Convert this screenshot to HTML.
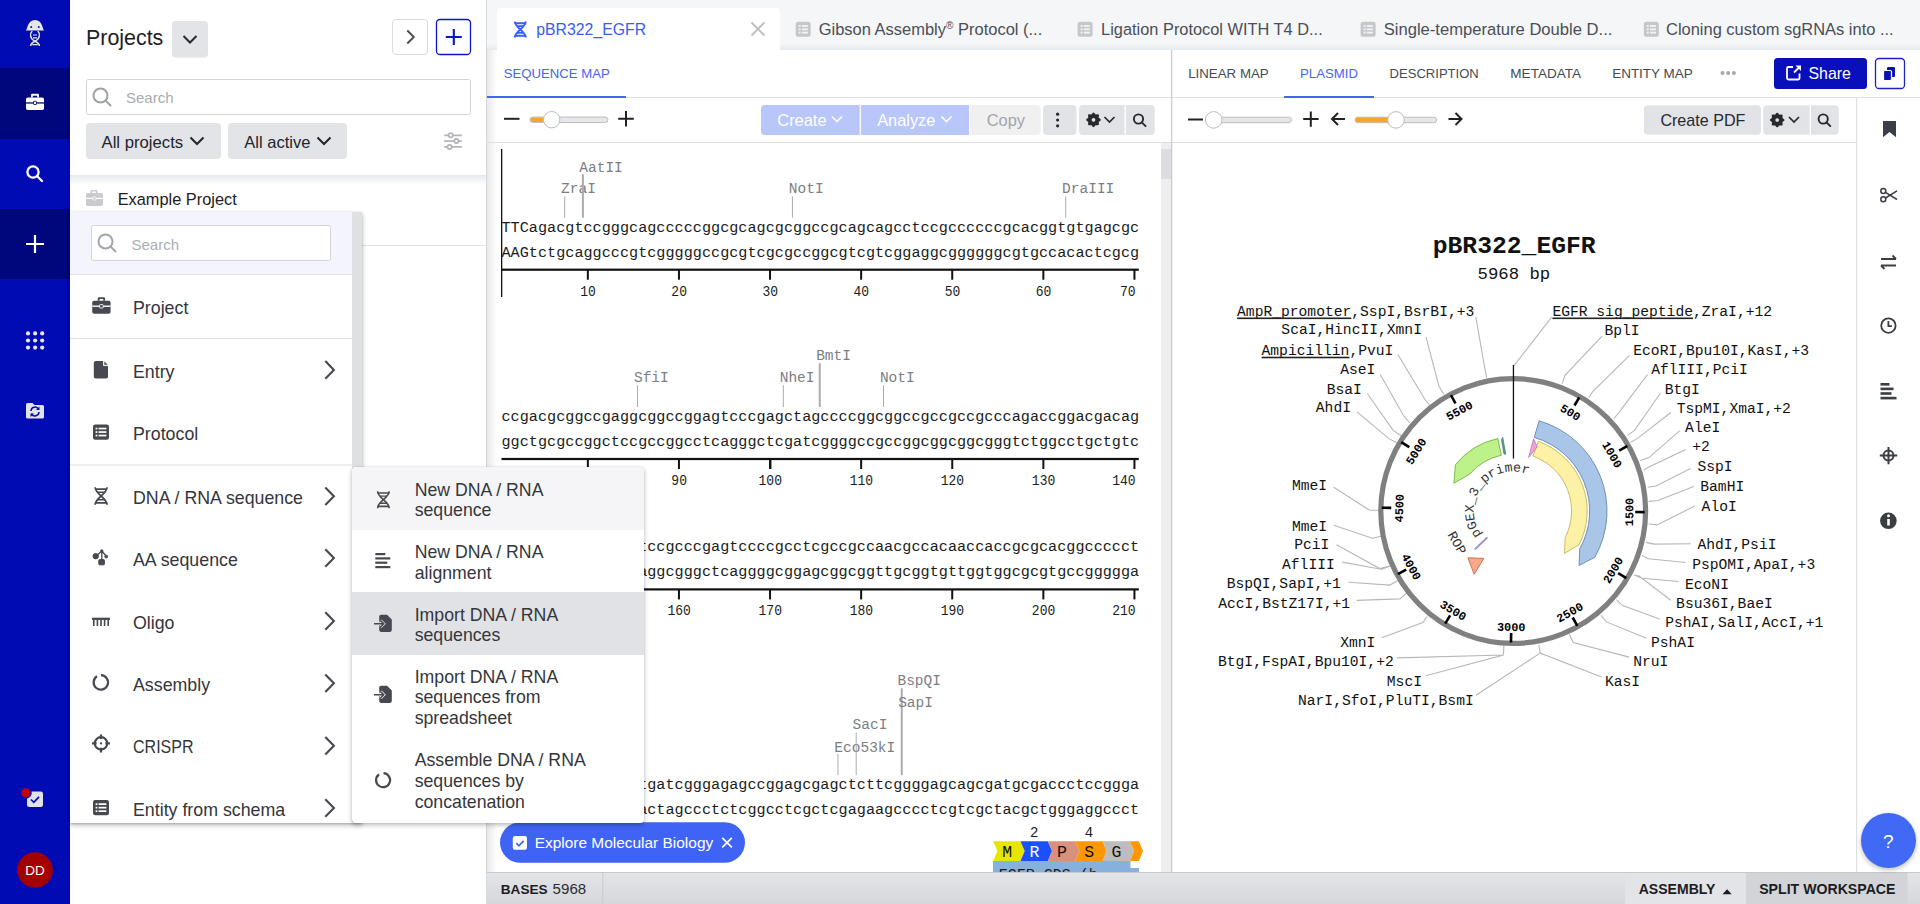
<!DOCTYPE html><html><head><meta charset="utf-8"><title>Benchling</title><style>html,body{margin:0;padding:0;width:1920px;height:904px;overflow:hidden;background:#fff;font-family:"Liberation Sans",sans-serif}.L{position:absolute;left:0;top:0}</style></head><body><svg class="L" width="1920" height="904" viewBox="0 0 1920 904"><defs><linearGradient id="hdrsh" x1="0" y1="0" x2="0" y2="1"><stop offset="0" stop-color="#0A3A50" stop-opacity="0.11"/><stop offset="1" stop-color="#0A3A50" stop-opacity="0"/></linearGradient><linearGradient id="pansh" x1="0" y1="0" x2="1" y2="0"><stop offset="0" stop-color="#000" stop-opacity="0.09"/><stop offset="1" stop-color="#000" stop-opacity="0"/></linearGradient><linearGradient id="stat" x1="0" y1="0" x2="0" y2="1"><stop offset="0" stop-color="#E4E5E8"/><stop offset="1" stop-color="#D6D7DA"/></linearGradient><linearGradient id="tabsh" x1="0" y1="0" x2="0" y2="1"><stop offset="0" stop-color="#0A3A50" stop-opacity="0"/><stop offset="1" stop-color="#0A3A50" stop-opacity="0.07"/></linearGradient></defs><rect x="0" y="0" width="1920" height="904" fill="#fff"/><rect x="0" y="0" width="70" height="904" fill="#000BB4"/><rect x="0" y="68" width="70" height="71" fill="#00077D"/><rect x="0" y="209" width="70" height="70" fill="#00077D"/><g fill="#E6E7EA"><path d="M25.8,30.6 C27.6,29.2 27.4,20 35,20 C42.6,20 42.4,29.2 44.2,30.6 Z"/></g><rect x="30.4" y="26.2" width="1.7" height="1.7" fill="#000BB4"/><rect x="37.9" y="26.2" width="1.7" height="1.7" fill="#000BB4"/><g fill="none" stroke="#E6E7EA" stroke-width="1.5"><path d="M32.2,31 C29.6,33.5 29.8,39 35,41.2 C38.6,42.8 39.4,44.6 39.4,46"/><path d="M37.8,31 C40.4,33.5 40.2,39 35,41.2 C31.4,42.8 30.6,44.6 30.6,46"/><path d="M33,35 h4 M33,37.8 h4 M32.3,44.6 h5.4" stroke-width="1.2"/></g><g fill="#fff"><rect x="26" y="97.5" width="18" height="12.5" rx="1.8"/><path d="M31,97.5 v-2.5 a1.2,1.2 0 0 1 1.2,-1.2 h5.6 a1.2,1.2 0 0 1 1.2,1.2 v2.5 h-1.8 v-1.8 h-4.4 v1.8 z"/></g><rect x="26" y="102.3" width="18" height="1.3" fill="#00077D"/><rect x="33.5" y="101.3" width="3" height="3.2" rx="0.6" fill="#fff" stroke="#00077D" stroke-width="0.9"/><g fill="none" stroke="#fff" stroke-width="2.3" stroke-linecap="round"><circle cx="33" cy="172" r="5.6"/><path d="M37.2,176.2 L42,181"/></g><g stroke="#fff" stroke-width="2.2"><path d="M35,235 v18 M26,244 h18"/></g><g fill="#E6E7EA"><circle cx="28.0" cy="333.4" r="2.1"/><circle cx="35.1" cy="333.4" r="2.1"/><circle cx="42.2" cy="333.4" r="2.1"/><circle cx="28.0" cy="340.5" r="2.1"/><circle cx="35.1" cy="340.5" r="2.1"/><circle cx="42.2" cy="340.5" r="2.1"/><circle cx="28.0" cy="347.59999999999997" r="2.1"/><circle cx="35.1" cy="347.59999999999997" r="2.1"/><circle cx="42.2" cy="347.59999999999997" r="2.1"/></g><path d="M26,404.5 a1.5,1.5 0 0 1 1.5,-1.5 h5 l2,2 h8 a1.5,1.5 0 0 1 1.5,1.5 v10.5 a1.5,1.5 0 0 1 -1.5,1.5 h-15 a1.5,1.5 0 0 1 -1.5,-1.5 z" fill="#E1E2E6"/><g fill="none" stroke="#000BB4" stroke-width="1.5"><path d="M31,411 a4,4 0 0 1 7.5,-1.8"/><path d="M39,412 a4,4 0 0 1 -7.5,1.8"/></g><path d="M39.5,406.5 v3.5 h-3.5 z M30.5,417 v-3.5 h3.5 z" fill="#000BB4"/><rect x="27" y="791.5" width="16" height="15.5" rx="2.2" fill="#E1E2E6"/><path d="M31,799.5 l2.8,2.8 l5.2,-5.5" fill="none" stroke="#000BB4" stroke-width="1.7"/><circle cx="25.8" cy="792.8" r="5.3" fill="#C00000" stroke="#000BB4" stroke-width="1.3"/><circle cx="35" cy="870" r="17.8" fill="#A30000"/><text x="35" y="874.8" font-size="13.5" fill="#fff" font-family='"Liberation Sans", sans-serif' text-anchor="middle">DD</text><rect x="70" y="0" width="417" height="904" fill="#fff"/><text x="86" y="45.3" font-size="21.4" fill="#1E2024" font-family='"Liberation Sans", sans-serif'>Projects</text><rect x="172" y="21" width="36" height="36.5" rx="4" fill="#E3E4E7"/><path d="M183.5,36 l6.5,6.5 l6.5,-6.5" fill="none" stroke="#26292E" stroke-width="2"/><rect x="392.5" y="19.5" width="35" height="35" rx="3.5" fill="#fff" stroke="#D9DBDF" stroke-width="1"/><path d="M407.3,30.5 l6.5,6.5 l-6.5,6.5" fill="none" stroke="#45484D" stroke-width="1.8"/><rect x="436.5" y="19.5" width="34" height="35" rx="3.5" fill="#fff" stroke="#0B17C4" stroke-width="1.3"/><path d="M453.8,29 v16 M445.8,37 h16" stroke="#0B17C4" stroke-width="2.1"/><rect x="86.5" y="79.5" width="384" height="35" rx="2" fill="#fff" stroke="#D3D5D9" stroke-width="1"/><g fill="none" stroke="#9EA1A6" stroke-width="2"><circle cx="100.5" cy="95.5" r="7"/><path d="M105.5,100.5 l5,5" stroke-linecap="round"/></g><text x="126" y="102.8" font-size="15" fill="#A8ABB0" font-family='"Liberation Sans", sans-serif'>Search</text><rect x="86" y="123" width="135" height="36" rx="4" fill="#E3E4E7"/><text x="101.5" y="147.6" font-size="16.7" fill="#22252A" font-family='"Liberation Sans", sans-serif'>All projects</text><path d="M190.5,137.5 l6.5,6.5 l6.5,-6.5" fill="none" stroke="#22252A" stroke-width="2"/><rect x="228" y="123" width="119" height="36" rx="4" fill="#E3E4E7"/><text x="244.3" y="147.6" font-size="16.5" fill="#22252A" font-family='"Liberation Sans", sans-serif'>All active</text><path d="M317.5,137.5 l6.5,6.5 l6.5,-6.5" fill="none" stroke="#22252A" stroke-width="2"/><g stroke="#B3B5B9" stroke-width="1.8" fill="#fff"><path d="M444.2,135.3 h17.6 M444.2,141.1 h17.6 M444.2,146.9 h17.6" fill="none"/><circle cx="450.7" cy="135.3" r="2.1"/><circle cx="456.4" cy="141.1" r="2.1"/><circle cx="449.6" cy="146.9" r="2.1"/></g><rect x="70" y="175" width="417" height="10" fill="url(#hdrsh)"/><g fill="#C9CBCF"><rect x="86" y="193" width="17" height="13" rx="1.8"/><path d="M90.5,193 v-2 a1,1 0 0 1 1,-1 h5 a1,1 0 0 1 1,1 v2 h-1.6 v-1.5 h-3.8 v1.5 z"/></g><rect x="86" y="197.8" width="17" height="1.2" fill="#fff"/><rect x="93" y="197" width="3" height="3" rx="0.5" fill="#C9CBCF" stroke="#fff" stroke-width="0.8"/><text x="117.7" y="205.4" font-size="16.35" fill="#1E2024" font-family='"Liberation Sans", sans-serif'>Example Project</text><rect x="70" y="245" width="417" height="1" fill="#E1E3E6"/><rect x="486" y="0" width="1.2" height="904" fill="#D6D8DC"/><rect x="487" y="0" width="1433" height="50" fill="#F5F6F8"/><rect x="487" y="44" width="1433" height="6" fill="url(#tabsh)"/><path d="M497,50 v-38 a4,4 0 0 1 4,-4 h275 a4,4 0 0 1 4,4 v38 z" fill="#fff"/><g fill="none" stroke="#3660F2" stroke-width="1.9"><path d="M514.86,21.5 C514.86,27.9 525.7399999999999,31.1 525.7399999999999,37.5"/><path d="M525.7399999999999,21.5 C525.7399999999999,27.9 514.86,31.1 514.86,37.5"/><path d="M514.86,23.26 h10.88 M514.86,35.74 h10.88"/><path d="M516.972,26.14 h6.656000000000001 M516.972,32.86 h6.656000000000001" stroke-width="1.615"/></g><text x="536.3" y="35.3" font-size="15.8" fill="#3A5DEE" font-family='"Liberation Sans", sans-serif'>pBR322_EGFR</text><path d="M751.5,22.5 l13,13 M764.5,22.5 l-13,13" stroke="#BDBFC3" stroke-width="1.9"/><rect x="795.7" y="21.8" width="15" height="15" rx="2.5" fill="#C5C7CB"/><g fill="#F3F4F6"><rect x="798.7" y="25.1" width="2" height="1.8"/><rect x="801.9000000000001" y="25.1" width="6" height="1.8"/><rect x="798.7" y="28.4" width="2" height="1.8"/><rect x="801.9000000000001" y="28.4" width="6" height="1.8"/><rect x="798.7" y="31.700000000000003" width="2" height="1.8"/><rect x="801.9000000000001" y="31.700000000000003" width="6" height="1.8"/></g><text x="818.7" y="35" font-size="16.3" fill="#4A4E56" font-family='"Liberation Sans", sans-serif' textLength="223.6" lengthAdjust="spacingAndGlyphs">Gibson Assembly<tspan font-size="10" dy="-6">®</tspan><tspan dy="6"> Protocol (...</tspan></text><rect x="1077.6" y="21.8" width="15" height="15" rx="2.5" fill="#C5C7CB"/><g fill="#F3F4F6"><rect x="1080.6" y="25.1" width="2" height="1.8"/><rect x="1083.8" y="25.1" width="6" height="1.8"/><rect x="1080.6" y="28.4" width="2" height="1.8"/><rect x="1083.8" y="28.4" width="6" height="1.8"/><rect x="1080.6" y="31.700000000000003" width="2" height="1.8"/><rect x="1083.8" y="31.700000000000003" width="6" height="1.8"/></g><text x="1101.1" y="35" font-size="16.3" fill="#4A4E56" font-family='"Liberation Sans", sans-serif' textLength="221.6" lengthAdjust="spacingAndGlyphs">Ligation Protocol WITH T4 D...</text><rect x="1360.6" y="21.8" width="15" height="15" rx="2.5" fill="#C5C7CB"/><g fill="#F3F4F6"><rect x="1363.6" y="25.1" width="2" height="1.8"/><rect x="1366.8" y="25.1" width="6" height="1.8"/><rect x="1363.6" y="28.4" width="2" height="1.8"/><rect x="1366.8" y="28.4" width="6" height="1.8"/><rect x="1363.6" y="31.700000000000003" width="2" height="1.8"/><rect x="1366.8" y="31.700000000000003" width="6" height="1.8"/></g><text x="1383.7" y="35" font-size="16.3" fill="#4A4E56" font-family='"Liberation Sans", sans-serif' textLength="228.7" lengthAdjust="spacingAndGlyphs">Single-temperature Double D...</text><rect x="1643.8" y="21.8" width="15" height="15" rx="2.5" fill="#C5C7CB"/><g fill="#F3F4F6"><rect x="1646.8" y="25.1" width="2" height="1.8"/><rect x="1650.0" y="25.1" width="6" height="1.8"/><rect x="1646.8" y="28.4" width="2" height="1.8"/><rect x="1650.0" y="28.4" width="6" height="1.8"/><rect x="1646.8" y="31.700000000000003" width="2" height="1.8"/><rect x="1650.0" y="31.700000000000003" width="6" height="1.8"/></g><text x="1666" y="35" font-size="16.3" fill="#4A4E56" font-family='"Liberation Sans", sans-serif' textLength="227.7" lengthAdjust="spacingAndGlyphs">Cloning custom sgRNAs into ...</text><rect x="487" y="50" width="1433" height="854" fill="#fff"/><rect x="487" y="50" width="10" height="822" fill="url(#pansh)"/><text x="503.8" y="78" font-size="13.15" fill="#4766E8" font-family='"Liberation Sans", sans-serif'>SEQUENCE MAP</text><rect x="487" y="97" width="1433" height="1" fill="#DDE0E4"/><rect x="487" y="96" width="139" height="2" fill="#4766E8"/><path d="M504,118.8 h15.5" stroke="#222" stroke-width="2"/><rect x="530" y="117" width="78" height="5.5" rx="2.75" fill="#E6E7E9" stroke="#AEB1B6" stroke-width="0.8"/><rect x="530.4" y="117.4" width="14" height="4.7" rx="2.35" fill="#F4A52A"/><circle cx="551.7" cy="119.7" r="8.2" fill="#fff" stroke="#B9BCC1" stroke-width="1"/><path d="M626,111 v15.5 M618.2,118.8 h15.6" stroke="#222" stroke-width="2"/><path d="M765,105 h94.7 v30 h-94.7 a4,4 0 0 1 -4,-4 v-22 a4,4 0 0 1 4,-4 z" fill="#B8C6FA"/><text x="777.3" y="126.4" font-size="16.4" fill="#fff" font-family='"Liberation Sans", sans-serif'>Create</text><path d="M832,116.5 l5,5 l5,-5" fill="none" stroke="#fff" stroke-width="1.6"/><rect x="861" y="105" width="108" height="30" fill="#B8C6FA"/><text x="877.2" y="126.4" font-size="16.35" fill="#fff" font-family='"Liberation Sans", sans-serif'>Analyze</text><path d="M941.5,116.5 l5,5 l5,-5" fill="none" stroke="#fff" stroke-width="1.6"/><path d="M970,105 h66.7 a4,4 0 0 1 4,4 v22 a4,4 0 0 1 -4,4 h-66.7 z" fill="#F0F0F1"/><text x="986.7" y="126.4" font-size="16.44" fill="#A3A5A9" font-family='"Liberation Sans", sans-serif'>Copy</text><rect x="1043" y="105" width="33.5" height="30" rx="4" fill="#E2E3E6"/><g fill="#26292E"><circle cx="1057.6" cy="114.2" r="1.6"/><circle cx="1057.6" cy="120" r="1.6"/><circle cx="1057.6" cy="125.8" r="1.6"/></g><path d="M1083,105 h41.5 v30 h-41.5 a4,4 0 0 1 -4,-4 v-22 a4,4 0 0 1 4,-4 z" fill="#E2E3E6"/><g><circle cx="1093.5" cy="119.8" r="4.960000000000001" fill="#26292E"/><path d="M1093.50,113.60 L1095.21,115.68 L1097.88,115.42 L1097.62,118.09 L1099.70,119.80 L1097.62,121.51 L1097.88,124.18 L1095.21,123.92 L1093.50,126.00 L1091.79,123.92 L1089.12,124.18 L1089.38,121.51 L1087.30,119.80 L1089.38,118.09 L1089.12,115.42 L1091.79,115.68Z" fill="#26292E" stroke="#26292E" stroke-width="2.17" stroke-linejoin="round"/><circle cx="1093.5" cy="119.8" r="1.8599999999999999" fill="#E2E3E6"/></g><path d="M1104.5,117 l5,5 l5,-5" fill="none" stroke="#26292E" stroke-width="1.7"/><path d="M1126,105 h24.7 a4,4 0 0 1 4,4 v22 a4,4 0 0 1 -4,4 h-24.7 z" fill="#E2E3E6"/><g fill="none" stroke="#26292E" stroke-width="1.9"><circle cx="1138.5" cy="119" r="4.6"/><path d="M1141.8,122.3 l3.8,3.8" stroke-linecap="round"/></g><rect x="487" y="142" width="1370" height="1" fill="#DDE0E4"/><rect x="1161" y="143" width="10" height="729" fill="#EDEEF0"/><rect x="1161" y="149" width="10" height="30" fill="#DCDDE0"/><rect x="1171" y="50" width="1.3" height="822" fill="#C9CDD2"/><rect x="501" y="149" width="1.3" height="148" fill="#111"/><text x="501.5" y="231.7" font-size="15.17" fill="#1B1D20" font-family='"Liberation Mono", monospace' textLength="637.70" lengthAdjust="spacing">TTCagacgtccgggcagcccccggcgcagcgcggccgcagcagcctccgccccccgcacggtgtgagcgc</text><text x="501.5" y="256.5" font-size="15.17" fill="#1B1D20" font-family='"Liberation Mono", monospace' textLength="637.70" lengthAdjust="spacing">AAGtctgcaggcccgtcgggggccgcgtcgcgccggcgtcgtcggaggcggggggcgtgccacactcgcg</text><rect x="501.5" y="268.59999999999997" width="637.3" height="2.2" fill="#111"/><rect x="586.84" y="269.7" width="2" height="10" fill="#111"/><text x="588.04" y="295.60" font-size="13" fill="#1B1D20" font-family='"Liberation Mono", monospace' text-anchor="middle" transform="translate(0 -29.56) scale(1 1.1)">10</text><rect x="677.94" y="269.7" width="2" height="10" fill="#111"/><text x="679.14" y="295.60" font-size="13" fill="#1B1D20" font-family='"Liberation Mono", monospace' text-anchor="middle" transform="translate(0 -29.56) scale(1 1.1)">20</text><rect x="769.04" y="269.7" width="2" height="10" fill="#111"/><text x="770.25" y="295.60" font-size="13" fill="#1B1D20" font-family='"Liberation Mono", monospace' text-anchor="middle" transform="translate(0 -29.56) scale(1 1.1)">30</text><rect x="860.14" y="269.7" width="2" height="10" fill="#111"/><text x="861.35" y="295.60" font-size="13" fill="#1B1D20" font-family='"Liberation Mono", monospace' text-anchor="middle" transform="translate(0 -29.56) scale(1 1.1)">40</text><rect x="951.24" y="269.7" width="2" height="10" fill="#111"/><text x="952.44" y="295.60" font-size="13" fill="#1B1D20" font-family='"Liberation Mono", monospace' text-anchor="middle" transform="translate(0 -29.56) scale(1 1.1)">50</text><rect x="1042.35" y="269.7" width="2" height="10" fill="#111"/><text x="1043.55" y="295.60" font-size="13" fill="#1B1D20" font-family='"Liberation Mono", monospace' text-anchor="middle" transform="translate(0 -29.56) scale(1 1.1)">60</text><rect x="1133.44" y="269.7" width="2" height="10" fill="#111"/><text x="1135.64" y="295.60" font-size="13" fill="#1B1D20" font-family='"Liberation Mono", monospace' text-anchor="end" transform="translate(0 -29.56) scale(1 1.1)">70</text><rect x="564.17" y="196.3" width="1" height="21.40" fill="#A9ACB0"/><text x="561.07" y="193.1" font-size="14.5" fill="#7B7E83" font-family='"Liberation Mono", monospace'>ZraI</text><rect x="581.89" y="174.2" width="2" height="43.50" fill="#A9ACB0"/><text x="579.29" y="171.5" font-size="14.5" fill="#7B7E83" font-family='"Liberation Mono", monospace'>AatII</text><rect x="791.92" y="196.5" width="1" height="21.20" fill="#A9ACB0"/><text x="788.82" y="193.1" font-size="14.5" fill="#7B7E83" font-family='"Liberation Mono", monospace'>NotI</text><rect x="1065.22" y="196.5" width="1" height="21.20" fill="#A9ACB0"/><text x="1062.12" y="193.1" font-size="14.5" fill="#7B7E83" font-family='"Liberation Mono", monospace'>DraIII</text><text x="501.5" y="421" font-size="15.17" fill="#1B1D20" font-family='"Liberation Mono", monospace' textLength="637.70" lengthAdjust="spacing">ccgacgcggccgaggcggccggagtcccgagctagccccggcggccgccgccgcccagaccggacgacag</text><text x="501.5" y="445.8" font-size="15.17" fill="#1B1D20" font-family='"Liberation Mono", monospace' textLength="637.70" lengthAdjust="spacing">ggctgcgccggctccgccggcctcagggctcgatcggggccgccggcggcggcgggtctggcctgctgtc</text><rect x="501.5" y="457.9" width="637.3" height="2.2" fill="#111"/><rect x="586.84" y="459" width="2" height="10" fill="#111"/><text x="588.04" y="484.90" font-size="13" fill="#1B1D20" font-family='"Liberation Mono", monospace' text-anchor="middle" transform="translate(0 -48.49) scale(1 1.1)">80</text><rect x="677.94" y="459" width="2" height="10" fill="#111"/><text x="679.14" y="484.90" font-size="13" fill="#1B1D20" font-family='"Liberation Mono", monospace' text-anchor="middle" transform="translate(0 -48.49) scale(1 1.1)">90</text><rect x="769.04" y="459" width="2.4" height="10" fill="#111"/><text x="770.25" y="484.90" font-size="13" fill="#1B1D20" font-family='"Liberation Mono", monospace' text-anchor="middle" transform="translate(0 -48.49) scale(1 1.1)">100</text><rect x="860.14" y="459" width="2" height="10" fill="#111"/><text x="861.35" y="484.90" font-size="13" fill="#1B1D20" font-family='"Liberation Mono", monospace' text-anchor="middle" transform="translate(0 -48.49) scale(1 1.1)">110</text><rect x="951.24" y="459" width="2" height="10" fill="#111"/><text x="952.44" y="484.90" font-size="13" fill="#1B1D20" font-family='"Liberation Mono", monospace' text-anchor="middle" transform="translate(0 -48.49) scale(1 1.1)">120</text><rect x="1042.35" y="459" width="2" height="10" fill="#111"/><text x="1043.55" y="484.90" font-size="13" fill="#1B1D20" font-family='"Liberation Mono", monospace' text-anchor="middle" transform="translate(0 -48.49) scale(1 1.1)">130</text><rect x="1133.44" y="459" width="2" height="10" fill="#111"/><text x="1135.64" y="484.90" font-size="13" fill="#1B1D20" font-family='"Liberation Mono", monospace' text-anchor="end" transform="translate(0 -48.49) scale(1 1.1)">140</text><rect x="637.05" y="385.2" width="1" height="21.80" fill="#A9ACB0"/><text x="633.95" y="382.1" font-size="14.5" fill="#7B7E83" font-family='"Liberation Mono", monospace'>SfiI</text><rect x="782.81" y="385.2" width="1" height="21.80" fill="#A9ACB0"/><text x="779.71" y="382.1" font-size="14.5" fill="#7B7E83" font-family='"Liberation Mono", monospace'>NheI</text><rect x="818.75" y="363.3" width="2" height="43.70" fill="#A9ACB0"/><text x="816.15" y="360" font-size="14.5" fill="#7B7E83" font-family='"Liberation Mono", monospace'>BmtI</text><rect x="883.02" y="385.2" width="1" height="21.80" fill="#A9ACB0"/><text x="879.92" y="382.1" font-size="14.5" fill="#7B7E83" font-family='"Liberation Mono", monospace'>NotI</text><text x="501.5" y="551.4" font-size="15.17" fill="#1B1D20" font-family='"Liberation Mono", monospace' textLength="637.70" lengthAdjust="spacing">gcgaggcgagcgggctccgcccgagtccccgcctcgccgccaacgccacaaccaccgcgcacggccccct</text><text x="501.5" y="576.1999999999999" font-size="15.17" fill="#1B1D20" font-family='"Liberation Mono", monospace' textLength="637.70" lengthAdjust="spacing">cgctccgctcgcccgaggcgggctcaggggcggagcggcggttgcggtgttggtggcgcgtgccggggga</text><rect x="501.5" y="588.3" width="637.3" height="2.2" fill="#111"/><rect x="586.84" y="589.4" width="2" height="10" fill="#111"/><text x="588.04" y="615.30" font-size="13" fill="#1B1D20" font-family='"Liberation Mono", monospace' text-anchor="middle" transform="translate(0 -61.53) scale(1 1.1)">150</text><rect x="677.94" y="589.4" width="2" height="10" fill="#111"/><text x="679.14" y="615.30" font-size="13" fill="#1B1D20" font-family='"Liberation Mono", monospace' text-anchor="middle" transform="translate(0 -61.53) scale(1 1.1)">160</text><rect x="769.04" y="589.4" width="2" height="10" fill="#111"/><text x="770.25" y="615.30" font-size="13" fill="#1B1D20" font-family='"Liberation Mono", monospace' text-anchor="middle" transform="translate(0 -61.53) scale(1 1.1)">170</text><rect x="860.14" y="589.4" width="2" height="10" fill="#111"/><text x="861.35" y="615.30" font-size="13" fill="#1B1D20" font-family='"Liberation Mono", monospace' text-anchor="middle" transform="translate(0 -61.53) scale(1 1.1)">180</text><rect x="951.24" y="589.4" width="2" height="10" fill="#111"/><text x="952.44" y="615.30" font-size="13" fill="#1B1D20" font-family='"Liberation Mono", monospace' text-anchor="middle" transform="translate(0 -61.53) scale(1 1.1)">190</text><rect x="1042.35" y="589.4" width="2" height="10" fill="#111"/><text x="1043.55" y="615.30" font-size="13" fill="#1B1D20" font-family='"Liberation Mono", monospace' text-anchor="middle" transform="translate(0 -61.53) scale(1 1.1)">200</text><rect x="1133.44" y="589.4" width="2" height="10" fill="#111"/><text x="1135.64" y="615.30" font-size="13" fill="#1B1D20" font-family='"Liberation Mono", monospace' text-anchor="end" transform="translate(0 -61.53) scale(1 1.1)">210</text><text x="501.5" y="789.2" font-size="15.17" fill="#1B1D20" font-family='"Liberation Mono", monospace' textLength="637.70" lengthAdjust="spacing">cgcgccgagcggacctgatcgggagagccggagcgagctcttcggggagcagcgatgcgaccctccggga</text><text x="501.5" y="814.0" font-size="15.17" fill="#1B1D20" font-family='"Liberation Mono", monospace' textLength="637.70" lengthAdjust="spacing">gcgcggctcgcctggactagccctctcggcctcgctcgagaagcccctcgtcgctacgctgggaggccct</text><rect x="837.47" y="754" width="1" height="21.20" fill="#A9ACB0"/><text x="834.37" y="752" font-size="14.5" fill="#7B7E83" font-family='"Liberation Mono", monospace'>Eco53kI</text><rect x="855.69" y="732.4" width="1" height="42.80" fill="#A9ACB0"/><text x="852.59" y="728.6" font-size="14.5" fill="#7B7E83" font-family='"Liberation Mono", monospace'>SacI</text><rect x="900.74" y="688.3" width="2" height="86.90" fill="#A9ACB0"/><text x="898.14" y="707" font-size="14.5" fill="#7B7E83" font-family='"Liberation Mono", monospace'>SapI</text><text x="897.44" y="685.2" font-size="14.5" fill="#7B7E83" font-family='"Liberation Mono", monospace'>BspQI</text><path d="M993.2,841.2 h27.33 l4.2,9.899999999999977 l-4.2,9.899999999999977 h-27.33 l4.2,-9.899999999999977 z" fill="#E6E600"/><text x="1007.16" y="856.7" font-size="16.5" fill="#111" font-family='"Liberation Mono", monospace' text-anchor="middle">M</text><path d="M1020.5300000000001,841.2 h27.33 l4.2,9.899999999999977 l-4.2,9.899999999999977 h-27.33 l4.2,-9.899999999999977 z" fill="#1B4FFF"/><text x="1034.50" y="856.7" font-size="16.5" fill="#fff" font-family='"Liberation Mono", monospace' text-anchor="middle">R</text><path d="M1047.8600000000001,841.2 h27.33 l4.2,9.899999999999977 l-4.2,9.899999999999977 h-27.33 l4.2,-9.899999999999977 z" fill="#D9907C"/><text x="1061.83" y="856.7" font-size="16.5" fill="#111" font-family='"Liberation Mono", monospace' text-anchor="middle">P</text><path d="M1075.19,841.2 h27.33 l4.2,9.899999999999977 l-4.2,9.899999999999977 h-27.33 l4.2,-9.899999999999977 z" fill="#FF9800"/><text x="1089.15" y="856.7" font-size="16.5" fill="#111" font-family='"Liberation Mono", monospace' text-anchor="middle">S</text><path d="M1102.52,841.2 h27.33 l4.2,9.899999999999977 l-4.2,9.899999999999977 h-27.33 l4.2,-9.899999999999977 z" fill="#BDBDBD"/><text x="1116.48" y="856.7" font-size="16.5" fill="#111" font-family='"Liberation Mono", monospace' text-anchor="middle">G</text><path d="M1129.85,841.2 h9 l4.2,9.899999999999977 l-4.2,9.899999999999977 h-9 l4.2,-9.899999999999977 z" fill="#FF9800"/><text x="1034.19" y="836.9" font-size="14" fill="#1B1D20" font-family='"Liberation Mono", monospace' text-anchor="middle">2</text><text x="1088.86" y="836.9" font-size="14" fill="#1B1D20" font-family='"Liberation Mono", monospace' text-anchor="middle">4</text><rect x="993" y="861" width="137.5" height="11" fill="#88B0DC"/><rect x="1130" y="868" width="9" height="4" fill="#88B0DC"/><text x="998.7" y="879" font-size="15" fill="#1B1D20" font-family='"Liberation Mono", monospace'>EGFR CDS (h</text><text x="1188.2" y="78.2" font-size="13.15" fill="#454A54" font-family='"Liberation Sans", sans-serif' textLength="80.5" lengthAdjust="spacingAndGlyphs">LINEAR MAP</text><text x="1300" y="78.2" font-size="13.15" fill="#4766E8" font-family='"Liberation Sans", sans-serif' textLength="58.0" lengthAdjust="spacingAndGlyphs">PLASMID</text><text x="1389.6" y="78.2" font-size="13.15" fill="#454A54" font-family='"Liberation Sans", sans-serif' textLength="89.2" lengthAdjust="spacingAndGlyphs">DESCRIPTION</text><text x="1510.3" y="78.2" font-size="13.15" fill="#454A54" font-family='"Liberation Sans", sans-serif' textLength="70.8" lengthAdjust="spacingAndGlyphs">METADATA</text><text x="1612.2" y="78.2" font-size="13.15" fill="#454A54" font-family='"Liberation Sans", sans-serif' textLength="80.5" lengthAdjust="spacingAndGlyphs">ENTITY MAP</text><rect x="1284" y="96" width="90" height="2" fill="#4766E8"/><g fill="#A5A8AD"><circle cx="1722.5" cy="73" r="2"/><circle cx="1728.2" cy="73" r="2"/><circle cx="1733.9" cy="73" r="2"/></g><rect x="1774" y="58" width="93" height="31" rx="3.5" fill="#0A0FBC"/><g fill="none" stroke="#fff" stroke-width="1.8"><path d="M1793,67 h-4.5 a1.5,1.5 0 0 0 -1.5,1.5 v9.5 a1.5,1.5 0 0 0 1.5,1.5 h9.5 a1.5,1.5 0 0 0 1.5,-1.5 v-4.5"/><path d="M1794,72.5 l6,-6"/></g><path d="M1795.5,65.5 h5.5 v5.5 z" fill="#fff"/><text x="1808.5" y="78.9" font-size="15.9" fill="#fff" font-family='"Liberation Sans", sans-serif'>Share</text><rect x="1875.5" y="58.5" width="29" height="30" rx="3.5" fill="#fff" stroke="#1A23C2" stroke-width="1.3"/><g fill="#0A0FBC"><rect x="1887" y="67" width="8" height="10" rx="1.2"/><rect x="1883.5" y="70.5" width="8" height="10" rx="1.2" stroke="#fff" stroke-width="1.2"/></g><path d="M1188,119.5 h15" stroke="#222" stroke-width="2"/><rect x="1205.5" y="117.2" width="86" height="5.5" rx="2.75" fill="#E6E7E9" stroke="#AEB1B6" stroke-width="0.8"/><circle cx="1213.7" cy="119.9" r="8.3" fill="#fff" stroke="#B9BCC1" stroke-width="1"/><path d="M1310.8,111.5 v15.2 M1303.2,119.1 h15.4" stroke="#222" stroke-width="2"/><g fill="none" stroke="#222" stroke-width="2"><path d="M1345,119 h-13 M1338,113 l-6,6 l6,6"/><path d="M1448.5,119 h13 M1455.5,113 l6,6 l-6,6"/></g><rect x="1355" y="117.2" width="81.7" height="5.5" rx="2.75" fill="#E6E7E9" stroke="#AEB1B6" stroke-width="0.8"/><rect x="1355.4" y="117.6" width="41" height="4.7" rx="2.35" fill="#F4A52A"/><circle cx="1396" cy="119.9" r="8.3" fill="#fff" stroke="#B9BCC1" stroke-width="1"/><rect x="1644" y="105.2" width="117" height="29.5" rx="4" fill="#E2E3E6"/><text x="1660.4" y="126" font-size="16.1" fill="#26292E" font-family='"Liberation Sans", sans-serif'>Create PDF</text><path d="M1767.2,105.2 h42.4 v29.5 h-42.4 a4,4 0 0 1 -4,-4 v-21.5 a4,4 0 0 1 4,-4 z" fill="#E2E3E6"/><g><circle cx="1777.2" cy="120" r="4.960000000000001" fill="#26292E"/><path d="M1777.20,113.80 L1778.91,115.88 L1781.58,115.62 L1781.32,118.29 L1783.40,120.00 L1781.32,121.71 L1781.58,124.38 L1778.91,124.12 L1777.20,126.20 L1775.49,124.12 L1772.82,124.38 L1773.08,121.71 L1771.00,120.00 L1773.08,118.29 L1772.82,115.62 L1775.49,115.88Z" fill="#26292E" stroke="#26292E" stroke-width="2.17" stroke-linejoin="round"/><circle cx="1777.2" cy="120" r="1.8599999999999999" fill="#E2E3E6"/></g><path d="M1789,117 l5,5 l5,-5" fill="none" stroke="#26292E" stroke-width="1.7"/><path d="M1811,105.2 h23.7 a4,4 0 0 1 4,4 v21.5 a4,4 0 0 1 -4,4 h-23.7 z" fill="#E2E3E6"/><g fill="none" stroke="#26292E" stroke-width="1.9"><circle cx="1823.2" cy="119" r="4.6"/><path d="M1826.5,122.3 l3.8,3.8" stroke-linecap="round"/></g><rect x="1856" y="97" width="1.2" height="775" fill="#DDE0E4"/><path d="M1883,121 h13 v16.3 l-6.5,-5.3 l-6.5,5.3 z" fill="#3B3E44"/><g fill="none" stroke="#3B3E44" stroke-width="1.5"><circle cx="1883.3" cy="191" r="2.5"/><circle cx="1883.3" cy="199.3" r="2.5"/><path d="M1885.5,192.3 L1897,199.5 M1885.5,198 L1897,190.8"/></g><g fill="none" stroke="#3B3E44" stroke-width="1.8"><path d="M1881,259 h15 M1892.5,255.5 l3.5,3.5"/><path d="M1896,265.5 h-15 M1884.5,269 l-3.5,-3.5"/></g><g fill="none" stroke="#3B3E44" stroke-width="1.8"><circle cx="1888.4" cy="325.6" r="7.2"/><path d="M1888.4,321 v5.2 h3.5"/></g><g fill="#3B3E44"><rect x="1880.5" y="383" width="9" height="2.6"/><rect x="1880.5" y="387.6" width="13" height="2.6"/><rect x="1880.5" y="392.2" width="11" height="2.6"/><rect x="1880.5" y="396.8" width="16" height="2.6"/></g><g fill="none" stroke="#3B3E44" stroke-width="2"><circle cx="1888.5" cy="455.6" r="5"/><path d="M1888.5,447 v17.3 M1879.8,455.6 h17.4"/></g><circle cx="1888.4" cy="520.8" r="8.3" fill="#3B3E44"/><rect x="1887.2" y="519" width="2.6" height="6.5" fill="#fff"/><circle cx="1888.5" cy="515.8" r="1.5" fill="#fff"/><text x="1514.2" y="252.9" font-size="24.7" font-weight="bold" fill="#111" font-family='"Liberation Mono", monospace' text-anchor="middle">pBR322_EGFR</text><text x="1513.9" y="278.8" font-size="17.3" fill="#111" font-family='"Liberation Mono", monospace' text-anchor="middle">5968 bp</text><path d="M1475.8,316.9 L1485.1,369.8 L1486.7,377.6 M1426,336.8 L1439,386.6 L1444,394.5 M1398,354.7 L1425,399.5 L1429.6,404.9 M1380.2,374.6 L1404.1,416.4 L1410,423 M1367.3,393.5 L1393.2,430.4 L1402.1,436.3 M1357,411.8 L1389.2,438.9 L1398.1,443.3 M1333.7,487.3 L1369.6,510.3 L1379.7,510.3 M1333.7,525.3 L1372.5,538.2 L1381.1,536.2 M1336.5,544.8 L1381.1,569.3 L1391.2,565.8 M1342.3,562.1 L1378.2,568.7 L1391.2,565.8 M1348.6,582.2 L1389.8,585.1 L1398.4,580.2 M1356.7,600.4 L1399.8,598.9 L1407,592.9 M1381.7,637.7 L1422.8,622.5 L1427.1,616.7 M1397,657.9 L1503.4,655 L1503.9,645.5 M1425.7,675.7 L1503.4,655 L1503.9,645.5 M1476,695.3 L1540.2,653.1 L1538.8,644.8 M1551.8,316.9 L1514,365.7 M1602,336.2 L1564.8,375.6 L1562.2,383.6 M1629.5,355.3 L1592.7,391.6 L1588.7,397.5 M1647.4,374.6 L1618.5,413.1 L1614,418.5 M1660.4,393.2 L1634.5,430.4 L1627.5,435.4 M1670.9,412.5 L1637.5,438.4 L1630.5,442.4 M1679.6,430.9 L1648.6,457.8 L1640.2,460.5 M1685.7,449.4 L1645.8,468.5 L1643.9,470.4 M1690.5,468.5 L1656.1,486 L1647.7,487.3 M1693.7,486.4 L1658,500.5 L1648.6,501.4 M1694.7,506.1 L1657.1,524.9 L1648.6,524 M1690.9,543.7 L1654.3,544.1 L1645.8,542.4 M1685.7,562.5 L1648.6,558.8 L1642,555.6 M1678.7,581.5 L1642,578.3 L1634.2,575 M1670.8,600.3 L1639.1,576 L1634.2,575 M1659.5,619.1 L1622.7,605.6 L1616.3,599.7 M1646.4,638.3 L1606.4,621.9 L1600.9,615.1 M1629.2,657.1 L1573.2,642.6 L1569.4,634.3 M1601.5,676.9 L1540.2,653.1 L1538.8,644.8" fill="none" stroke="#B5B7BA" stroke-width="1.1"/><text x="1237.07" y="315.5" font-size="14.65" fill="#111" font-family='"Liberation Mono", monospace'>AmpR_promoter,SspI,BsrBI,+3</text><rect x="1237.07" y="317.5" width="114.27" height="1.6" fill="#222"/><text x="1281.36" y="334.2" font-size="14.65" fill="#111" font-family='"Liberation Mono", monospace'>ScaI,HincII,XmnI</text><text x="1261.55" y="354.7" font-size="14.65" fill="#111" font-family='"Liberation Mono", monospace'>Ampicillin,PvuI</text><rect x="1261.55" y="356.7" width="87.90" height="1.6" fill="#222"/><text x="1340.24" y="373.6" font-size="14.65" fill="#111" font-family='"Liberation Mono", monospace'>AseI</text><text x="1326.74" y="393.5" font-size="14.65" fill="#111" font-family='"Liberation Mono", monospace'>BsaI</text><text x="1315.84" y="412.4" font-size="14.65" fill="#111" font-family='"Liberation Mono", monospace'>AhdI</text><text x="1291.94" y="490.2" font-size="14.65" fill="#111" font-family='"Liberation Mono", monospace'>MmeI</text><text x="1291.94" y="530.5" font-size="14.65" fill="#111" font-family='"Liberation Mono", monospace'>MmeI</text><text x="1294.24" y="549.2" font-size="14.65" fill="#111" font-family='"Liberation Mono", monospace'>PciI</text><text x="1282.06" y="569.3" font-size="14.65" fill="#111" font-family='"Liberation Mono", monospace'>AflIII</text><text x="1226.63" y="588" font-size="14.65" fill="#111" font-family='"Liberation Mono", monospace'>BspQI,SapI,+1</text><text x="1218.25" y="608.1" font-size="14.65" fill="#111" font-family='"Liberation Mono", monospace'>AccI,BstZ17I,+1</text><text x="1340.24" y="647" font-size="14.65" fill="#111" font-family='"Liberation Mono", monospace'>XmnI</text><text x="1218.00" y="665.6" font-size="14.65" fill="#111" font-family='"Liberation Mono", monospace'>BtgI,FspAI,Bpu10I,+2</text><text x="1386.84" y="685.8" font-size="14.65" fill="#111" font-family='"Liberation Mono", monospace'>MscI</text><text x="1298.00" y="705.3" font-size="14.65" fill="#111" font-family='"Liberation Mono", monospace'>NarI,SfoI,PluTI,BsmI</text><text x="1552.40" y="315.5" font-size="14.65" fill="#111" font-family='"Liberation Mono", monospace'>EGFR sig_peptide,ZraI,+12</text><rect x="1552.40" y="317.5" width="140.64" height="1.6" fill="#222"/><text x="1604.40" y="334.8" font-size="14.65" fill="#111" font-family='"Liberation Mono", monospace'>BplI</text><text x="1633.30" y="354.7" font-size="14.65" fill="#111" font-family='"Liberation Mono", monospace'>EcoRI,Bpu10I,KasI,+3</text><text x="1651.20" y="373.6" font-size="14.65" fill="#111" font-family='"Liberation Mono", monospace'>AflIII,PciI</text><text x="1664.70" y="393.6" font-size="14.65" fill="#111" font-family='"Liberation Mono", monospace'>BtgI</text><text x="1676.70" y="412.5" font-size="14.65" fill="#111" font-family='"Liberation Mono", monospace'>TspMI,XmaI,+2</text><text x="1685.10" y="432.4" font-size="14.65" fill="#111" font-family='"Liberation Mono", monospace'>AleI</text><text x="1692.20" y="451.3" font-size="14.65" fill="#111" font-family='"Liberation Mono", monospace'>+2</text><text x="1697.40" y="471.4" font-size="14.65" fill="#111" font-family='"Liberation Mono", monospace'>SspI</text><text x="1700.30" y="490.5" font-size="14.65" fill="#111" font-family='"Liberation Mono", monospace'>BamHI</text><text x="1701.60" y="510.5" font-size="14.65" fill="#111" font-family='"Liberation Mono", monospace'>AloI</text><text x="1697.40" y="549.4" font-size="14.65" fill="#111" font-family='"Liberation Mono", monospace'>AhdI,PsiI</text><text x="1692.20" y="569.1" font-size="14.65" fill="#111" font-family='"Liberation Mono", monospace'>PspOMI,ApaI,+3</text><text x="1685.00" y="588.8" font-size="14.65" fill="#111" font-family='"Liberation Mono", monospace'>EcoNI</text><text x="1676.10" y="608" font-size="14.65" fill="#111" font-family='"Liberation Mono", monospace'>Bsu36I,BaeI</text><text x="1665.20" y="627.4" font-size="14.65" fill="#111" font-family='"Liberation Mono", monospace'>PshAI,SalI,AccI,+1</text><text x="1651.00" y="647.2" font-size="14.65" fill="#111" font-family='"Liberation Mono", monospace'>PshAI</text><text x="1633.20" y="666" font-size="14.65" fill="#111" font-family='"Liberation Mono", monospace'>NruI</text><text x="1604.90" y="685.8" font-size="14.65" fill="#111" font-family='"Liberation Mono", monospace'>KasI</text><circle cx="1513.2" cy="511" r="132.4" fill="none" stroke="#808080" stroke-width="5.2"/><path d="M1574.50,405.52 L1579.27,397.30" stroke="#000" stroke-width="2.6"/><text x="1569.97" y="413.30" font-size="11.8" font-weight="bold" fill="#000" font-family='"Liberation Mono", monospace' text-anchor="middle" dominant-baseline="central" transform="rotate(30.16 1569.97 413.30)">500</text><path d="M1619.20,450.59 L1627.45,445.89" stroke="#000" stroke-width="2.6"/><text x="1611.38" y="455.05" font-size="11.8" font-weight="bold" fill="#000" font-family='"Liberation Mono", monospace' text-anchor="middle" dominant-baseline="central" transform="rotate(60.32 1611.38 455.05)">1000</text><path d="M1635.20,512.03 L1644.70,512.11" stroke="#000" stroke-width="2.6"/><text x="1630.20" y="511.99" font-size="11.8" font-weight="bold" fill="#000" font-family='"Liberation Mono", monospace' text-anchor="middle" dominant-baseline="central" transform="rotate(-89.52 1630.20 511.99)">1500</text><path d="M1618.16,573.18 L1626.34,578.02" stroke="#000" stroke-width="2.6"/><text x="1613.86" y="570.63" font-size="11.8" font-weight="bold" fill="#000" font-family='"Liberation Mono", monospace' text-anchor="middle" dominant-baseline="central" transform="rotate(-59.36 1613.86 570.63)">2000</text><path d="M1572.71,617.50 L1577.34,625.79" stroke="#000" stroke-width="2.6"/><text x="1570.27" y="613.14" font-size="11.8" font-weight="bold" fill="#000" font-family='"Liberation Mono", monospace' text-anchor="middle" dominant-baseline="central" transform="rotate(-29.20 1570.27 613.14)">2500</text><path d="M1511.15,632.98 L1510.98,642.48" stroke="#000" stroke-width="2.6"/><text x="1511.23" y="627.98" font-size="11.8" font-weight="bold" fill="#000" font-family='"Liberation Mono", monospace' text-anchor="middle" dominant-baseline="central" transform="rotate(0.97 1511.23 627.98)">3000</text><path d="M1450.14,615.44 L1445.22,623.57" stroke="#000" stroke-width="2.6"/><text x="1452.72" y="611.16" font-size="11.8" font-weight="bold" fill="#000" font-family='"Liberation Mono", monospace' text-anchor="middle" dominant-baseline="central" transform="rotate(31.13 1452.72 611.16)">3500</text><path d="M1406.20,569.61 L1397.87,574.18" stroke="#000" stroke-width="2.6"/><text x="1410.59" y="567.21" font-size="11.8" font-weight="bold" fill="#000" font-family='"Liberation Mono", monospace' text-anchor="middle" dominant-baseline="central" transform="rotate(61.29 1410.59 567.21)">4000</text><path d="M1391.24,507.92 L1381.74,507.68" stroke="#000" stroke-width="2.6"/><text x="1400.24" y="508.15" font-size="11.8" font-weight="bold" fill="#000" font-family='"Liberation Mono", monospace' text-anchor="middle" dominant-baseline="central" transform="rotate(271.45 1400.24 508.15)">4500</text><path d="M1409.30,447.06 L1401.21,442.08" stroke="#000" stroke-width="2.6"/><text x="1416.96" y="451.78" font-size="11.8" font-weight="bold" fill="#000" font-family='"Liberation Mono", monospace' text-anchor="middle" dominant-baseline="central" transform="rotate(301.61 1416.96 451.78)">5000</text><path d="M1455.49,403.51 L1451.00,395.14" stroke="#000" stroke-width="2.6"/><text x="1459.75" y="411.44" font-size="11.8" font-weight="bold" fill="#000" font-family='"Liberation Mono", monospace' text-anchor="middle" dominant-baseline="central" transform="rotate(331.77 1459.75 411.44)">5500</text><path d="M1539.05,420.83 A93.8,93.8 0 0 1 1594.84,557.19 L1579.08,565.50 L1579.78,548.67 A76.5,76.5 0 0 0 1534.29,437.46 Z" fill="#A9C6E9" stroke="#6E8FB8" stroke-width="1"/><path d="M1538.27,441.37 A74,74 0 0 1 1579.13,544.60 L1564.44,553.39 L1565.23,537.51 A58.4,58.4 0 0 0 1532.98,456.05 Z" fill="#FDF1A6" stroke="#C9BC6A" stroke-width="1"/><path d="M1455.45,464.73 A74,74 0 0 1 1497.81,438.62 L1501.35,455.25 A57,57 0 0 0 1469.99,473.83 L1453.84,483.32 Z" fill="#BDF28A" stroke="#7DBB4E" stroke-width="1"/><path d="M1502.7,437.3 L1505.7,454.2 L1504,454 L1501.6,440 Z" fill="#5FA08A" stroke="#3F8070" stroke-width="0.8"/><path d="M1533.6,438.9 L1537.2,446.8 L1528.6,457.4 Z" fill="#EAA6D8" stroke="#C070A8" stroke-width="0.8"/><path d="M1487.4,537.4 L1474.8,549.4" stroke="#9C8CCB" stroke-width="2"/><path d="M1467.9,557.8 L1483.8,558.4 L1474.2,574.3 Z" fill="#F6AA8C" stroke="#D07050" stroke-width="1"/><rect x="1512.8" y="365" width="1.3" height="93.5" fill="#111"/><path id="prpath" d="M1481.65,534.77 A39.5,39.5 0 0 1 1543.46,485.61" fill="none"/><text font-size="13.2" fill="#333" font-family='"Liberation Mono", monospace'><textPath href="#prpath">pGEX_3_primer</textPath></text><text x="1456.19" y="543.25" font-size="13.5" fill="#333" font-family='"Liberation Mono", monospace' text-anchor="middle" dominant-baseline="central" transform="rotate(60.5 1456.19 543.25)">ROP</text><rect x="487" y="872" width="1433" height="32" fill="url(#stat)"/><rect x="487" y="872" width="1433" height="1" fill="#C5C8CD"/><rect x="602.3" y="873" width="1" height="31" fill="#C7C9CD"/><text x="500.8" y="893.6" font-size="13.6" fill="#1B1D22" font-family='"Liberation Sans", sans-serif' font-weight="bold">BASES</text><text x="552.6" y="893.6" font-size="15.1" fill="#2A2D32" font-family='"Liberation Sans", sans-serif'>5968</text><rect x="1625" y="873" width="121" height="31" fill="#E3E4E7"/><text x="1638.7" y="893.8" font-size="14" fill="#1B1D22" font-family='"Liberation Sans", sans-serif' font-weight="bold" textLength="76.8" lengthAdjust="spacingAndGlyphs">ASSEMBLY</text><path d="M1722.5,894.2 l4.6,-5 l4.6,5 z" fill="#1B1D22"/><rect x="1746" y="873" width="161.5" height="31" fill="#D3D4D8"/><text x="1759.2" y="893.8" font-size="14.07" fill="#1B1D22" font-family='"Liberation Sans", sans-serif' font-weight="bold" textLength="136.3" lengthAdjust="spacingAndGlyphs">SPLIT WORKSPACE</text><rect x="500" y="822.2" width="245" height="40.6" rx="20.3" fill="#3F64F5"/><rect x="512.8" y="836" width="14.2" height="13.8" rx="2.2" fill="#fff"/><path d="M516.3,843.2 l2.6,2.6 l4.7,-5" fill="none" stroke="#3F64F5" stroke-width="1.7"/><text x="534.7" y="848" font-size="15.4" fill="#fff" font-family='"Liberation Sans", sans-serif' textLength="178.5" lengthAdjust="spacingAndGlyphs">Explore Molecular Biology</text><path d="M722.3,837.8 l9.5,9.5 M731.8,837.8 l-9.5,9.5" stroke="#fff" stroke-width="1.7"/></svg><div style="position:absolute;left:1860.8px;top:812.5px;width:55px;height:55px;border-radius:50%;background:#4069F5;box-shadow:0 2px 5px rgba(0,0,0,0.25)"></div><svg class="L" width="1920" height="904" style="pointer-events:none"><text x="1888.3" y="847.5" font-size="19" fill="#fff" font-family='"Liberation Sans", sans-serif' text-anchor="middle">?</text></svg><div style="position:absolute;left:70px;top:212px;width:292px;height:611px;background:#fff;box-shadow:0 2px 5px rgba(0,0,0,0.28), 0 1px 2px rgba(0,0,0,0.15);overflow:hidden"><svg width="292" height="611" viewBox="70 212 292 611" style="position:absolute;left:0;top:0"><rect x="70" y="212" width="282" height="62" fill="#F3F4FC"/><rect x="352" y="212" width="10" height="610" fill="#DFE0E3"/><rect x="91.5" y="225.5" width="239" height="35" rx="2" fill="#fff" stroke="#D3D5D9" stroke-width="1"/><g fill="none" stroke="#A2A5AA" stroke-width="2"><circle cx="105.5" cy="241.5" r="7"/><path d="M110.5,246.5 l5,5" stroke-linecap="round"/></g><text x="131.5" y="249.6" font-size="15" fill="#ABAEB3" font-family='"Liberation Sans", sans-serif'>Search</text><rect x="70" y="274" width="282" height="1" fill="#DEE0E4"/><rect x="70" y="338" width="282" height="1" fill="#DEE0E4"/><rect x="70" y="464.5" width="282" height="1" fill="#DEE0E4"/><text x="133" y="314" font-size="17.8" fill="#33363B" font-family='"Liberation Sans", sans-serif'>Project</text><text x="133" y="377.5" font-size="17.8" fill="#33363B" font-family='"Liberation Sans", sans-serif'>Entry</text><path d="M325.3,361.1 l8.6,8.8 l-8.6,8.8" fill="none" stroke="#46494F" stroke-width="2.1"/><text x="133" y="439.5" font-size="17.8" fill="#33363B" font-family='"Liberation Sans", sans-serif'>Protocol</text><text x="133" y="503.8" font-size="17.8" fill="#33363B" font-family='"Liberation Sans", sans-serif'>DNA / RNA sequence</text><path d="M325.3,487.40000000000003 l8.6,8.8 l-8.6,8.8" fill="none" stroke="#46494F" stroke-width="2.1"/><text x="133" y="565.6" font-size="17.8" fill="#33363B" font-family='"Liberation Sans", sans-serif'>AA sequence</text><path d="M325.3,549.2 l8.6,8.8 l-8.6,8.8" fill="none" stroke="#46494F" stroke-width="2.1"/><text x="133" y="628.6" font-size="17.8" fill="#33363B" font-family='"Liberation Sans", sans-serif'>Oligo</text><path d="M325.3,612.2 l8.6,8.8 l-8.6,8.8" fill="none" stroke="#46494F" stroke-width="2.1"/><text x="133" y="690.8" font-size="17.8" fill="#33363B" font-family='"Liberation Sans", sans-serif'>Assembly</text><path d="M325.3,674.4 l8.6,8.8 l-8.6,8.8" fill="none" stroke="#46494F" stroke-width="2.1"/><text x="133" y="753.4" font-size="17.8" fill="#33363B" font-family='"Liberation Sans", sans-serif' textLength="60.5" lengthAdjust="spacingAndGlyphs">CRISPR</text><path d="M325.3,737.0 l8.6,8.8 l-8.6,8.8" fill="none" stroke="#46494F" stroke-width="2.1"/><text x="133" y="815.6" font-size="17.8" fill="#33363B" font-family='"Liberation Sans", sans-serif'>Entity from schema</text><path d="M325.3,799.2 l8.6,8.8 l-8.6,8.8" fill="none" stroke="#46494F" stroke-width="2.1"/><g fill="#46494F"><rect x="92.2" y="300.7" width="18.4" height="13.100000000000001" rx="2"/><path d="M97.72,300.7 v-2.3 a1.2,1.2 0 0 1 1.2,-1.2 h4.959999999999999 a1.2,1.2 0 0 1 1.2,1.2 v2.3 h-1.9 v-1.6 h-3.5599999999999996 v1.6 z"/></g><rect x="92.2" y="305.5" width="18.4" height="1.4" fill="#fff"/><rect x="99.60000000000001" y="304.6" width="3.6" height="3.4" rx="0.6" fill="#46494F" stroke="#fff" stroke-width="0.9"/><path d="M95.8,361 h7.7 l4.5,4.6 v11 a2,2 0 0 1 -2,2 h-10.2 a2,2 0 0 1 -2,-2 v-13.6 a2,2 0 0 1 2,-2 z" fill="#46494F"/><path d="M103.5,361 v4.6 h4.5" fill="#fff" stroke="#fff" stroke-width="0.8"/><path d="M104.3,361.4 l3.4,3.4 h-3.4 z" fill="#46494F"/><rect x="93" y="424.4" width="16" height="15.3" rx="2.2" fill="#46494F"/><g fill="#fff"><rect x="95.6" y="427.7" width="1.8" height="1.7"/><rect x="98.6" y="427.7" width="7.8" height="1.7"/><rect x="95.6" y="431.2" width="1.8" height="1.7"/><rect x="98.6" y="431.2" width="7.8" height="1.7"/><rect x="95.6" y="434.7" width="1.8" height="1.7"/><rect x="98.6" y="434.7" width="7.8" height="1.7"/></g><g fill="none" stroke="#46494F" stroke-width="1.7"><path d="M95.14999999999999,487.25 C95.14999999999999,494.25 107.05,497.75 107.05,504.75"/><path d="M107.05,487.25 C107.05,494.25 95.14999999999999,497.75 95.14999999999999,504.75"/><path d="M95.14999999999999,489.175 h11.9 M95.14999999999999,502.825 h11.9"/><path d="M97.46,492.325 h7.28 M97.46,499.675 h7.28" stroke-width="1.4449999999999998"/></g><g fill="#46494F" stroke="#46494F"><circle cx="95.7" cy="556.2" r="2.7"/><circle cx="106.2" cy="556.6" r="1.4"/><circle cx="101.8" cy="551" r="1.2"/><rect x="98.8" y="559.6" width="5.6" height="5.2" rx="0.8"/><path d="M101.8,551 v9 M101.8,551 l-5,4.5 M101.8,551 l4.4,5" fill="none" stroke-width="1.3"/></g><g fill="#46494F"><rect x="92" y="617.7" width="18" height="2.2"/><rect x="93.0" y="619" width="1.6" height="7"/><rect x="96.6" y="619" width="1.6" height="7"/><rect x="100.2" y="619" width="1.6" height="7"/><rect x="103.8" y="619" width="1.6" height="7"/><rect x="107.4" y="619" width="1.6" height="7"/></g><path d="M97,676.3 A7.2,7.2 0 1 0 101,675.2" fill="none" stroke="#46494F" stroke-width="2.2"/><g fill="none" stroke="#46494F" stroke-width="2.2"><circle cx="101" cy="743.4" r="6.2"/><path d="M101,734.4 v4.6 M101,747.8 v4.6 M92,743.4 h4.6 M105.4,743.4 h4.6"/></g><circle cx="101" cy="743.4" r="1.1" fill="#46494F"/><rect x="93" y="800" width="16" height="15.3" rx="2.2" fill="#46494F"/><g fill="#fff"><rect x="95.6" y="803.3" width="1.8" height="1.7"/><rect x="98.6" y="803.3" width="7.8" height="1.7"/><rect x="95.6" y="806.8" width="1.8" height="1.7"/><rect x="98.6" y="806.8" width="7.8" height="1.7"/><rect x="95.6" y="810.3" width="1.8" height="1.7"/><rect x="98.6" y="810.3" width="7.8" height="1.7"/></g></svg></div><div style="position:absolute;left:352px;top:467px;width:292px;height:356px;background:#fff;border-radius:4px;box-shadow:0 2px 5px rgba(0,0,0,0.28), 0 0 1px rgba(0,0,0,0.25);overflow:hidden"><svg width="292" height="356" viewBox="352 467 292 356" style="position:absolute;left:0;top:0"><rect x="352" y="467" width="292" height="63" fill="#F5F5F7"/><rect x="352" y="592" width="292" height="63" fill="#E1E2E5"/><text x="414.7" y="495.7" font-size="17.7" fill="#33363B" font-family='"Liberation Sans", sans-serif'>New DNA / RNA</text><text x="414.7" y="516.45" font-size="17.7" fill="#33363B" font-family='"Liberation Sans", sans-serif'>sequence</text><text x="414.7" y="558.2" font-size="17.7" fill="#33363B" font-family='"Liberation Sans", sans-serif'>New DNA / RNA</text><text x="414.7" y="578.95" font-size="17.7" fill="#33363B" font-family='"Liberation Sans", sans-serif'>alignment</text><text x="414.7" y="620.7" font-size="17.7" fill="#33363B" font-family='"Liberation Sans", sans-serif'>Import DNA / RNA</text><text x="414.7" y="641.45" font-size="17.7" fill="#33363B" font-family='"Liberation Sans", sans-serif'>sequences</text><text x="414.7" y="682.7" font-size="17.7" fill="#33363B" font-family='"Liberation Sans", sans-serif'>Import DNA / RNA</text><text x="414.7" y="703.45" font-size="17.7" fill="#33363B" font-family='"Liberation Sans", sans-serif'>sequences from</text><text x="414.7" y="724.2" font-size="17.7" fill="#33363B" font-family='"Liberation Sans", sans-serif'>spreadsheet</text><text x="414.7" y="766.3" font-size="17.7" fill="#33363B" font-family='"Liberation Sans", sans-serif'>Assemble DNA / RNA</text><text x="414.7" y="787.05" font-size="17.7" fill="#33363B" font-family='"Liberation Sans", sans-serif'>sequences by</text><text x="414.7" y="807.8" font-size="17.7" fill="#33363B" font-family='"Liberation Sans", sans-serif'>concatenation</text><g fill="none" stroke="#46494F" stroke-width="1.6"><path d="M377.61999999999995,491.2 C377.61999999999995,498.0 389.18,501.4 389.18,508.2"/><path d="M389.18,491.2 C389.18,498.0 377.61999999999995,501.4 377.61999999999995,508.2"/><path d="M377.61999999999995,493.07 h11.560000000000002 M377.61999999999995,506.33 h11.560000000000002"/><path d="M379.864,496.13 h7.072000000000001 M379.864,503.27 h7.072000000000001" stroke-width="1.36"/></g><g fill="#46494F"><rect x="375.3" y="553" width="10" height="2.2"/><rect x="375.3" y="557.3" width="15" height="2.2"/><rect x="375.3" y="561.6" width="12" height="2.2"/><rect x="375.3" y="566" width="15" height="2.2"/></g><path d="M379.5,614.8 h7.5 l4.8,4.8 v10.5 a1.8,1.8 0 0 1 -1.8,1.8 h-9 a1.8,1.8 0 0 1 -1.8,-1.8 v-13.5 a1.8,1.8 0 0 1 1.8,-1.8 z" fill="#46494F"/><path d="M374,623.8 h9.5 M380.5,620.5999999999999 l3.2,3.2 l-3.2,3.2" fill="none" stroke="#E1E2E5" stroke-width="3"/><path d="M374,623.8 h9.5 M380.5,620.5999999999999 l3.2,3.2 l-3.2,3.2" fill="none" stroke="#46494F" stroke-width="1.6"/><path d="M379.5,685.8 h7.5 l4.8,4.8 v10.5 a1.8,1.8 0 0 1 -1.8,1.8 h-9 a1.8,1.8 0 0 1 -1.8,-1.8 v-13.5 a1.8,1.8 0 0 1 1.8,-1.8 z" fill="#46494F"/><path d="M374,694.8 h9.5 M380.5,691.5999999999999 l3.2,3.2 l-3.2,3.2" fill="none" stroke="#fff" stroke-width="3"/><path d="M374,694.8 h9.5 M380.5,691.5999999999999 l3.2,3.2 l-3.2,3.2" fill="none" stroke="#46494F" stroke-width="1.6"/><path d="M379,774.5 A7,7 0 1 0 383.5,773.2" fill="none" stroke="#46494F" stroke-width="2.2"/></svg></div></body></html>
